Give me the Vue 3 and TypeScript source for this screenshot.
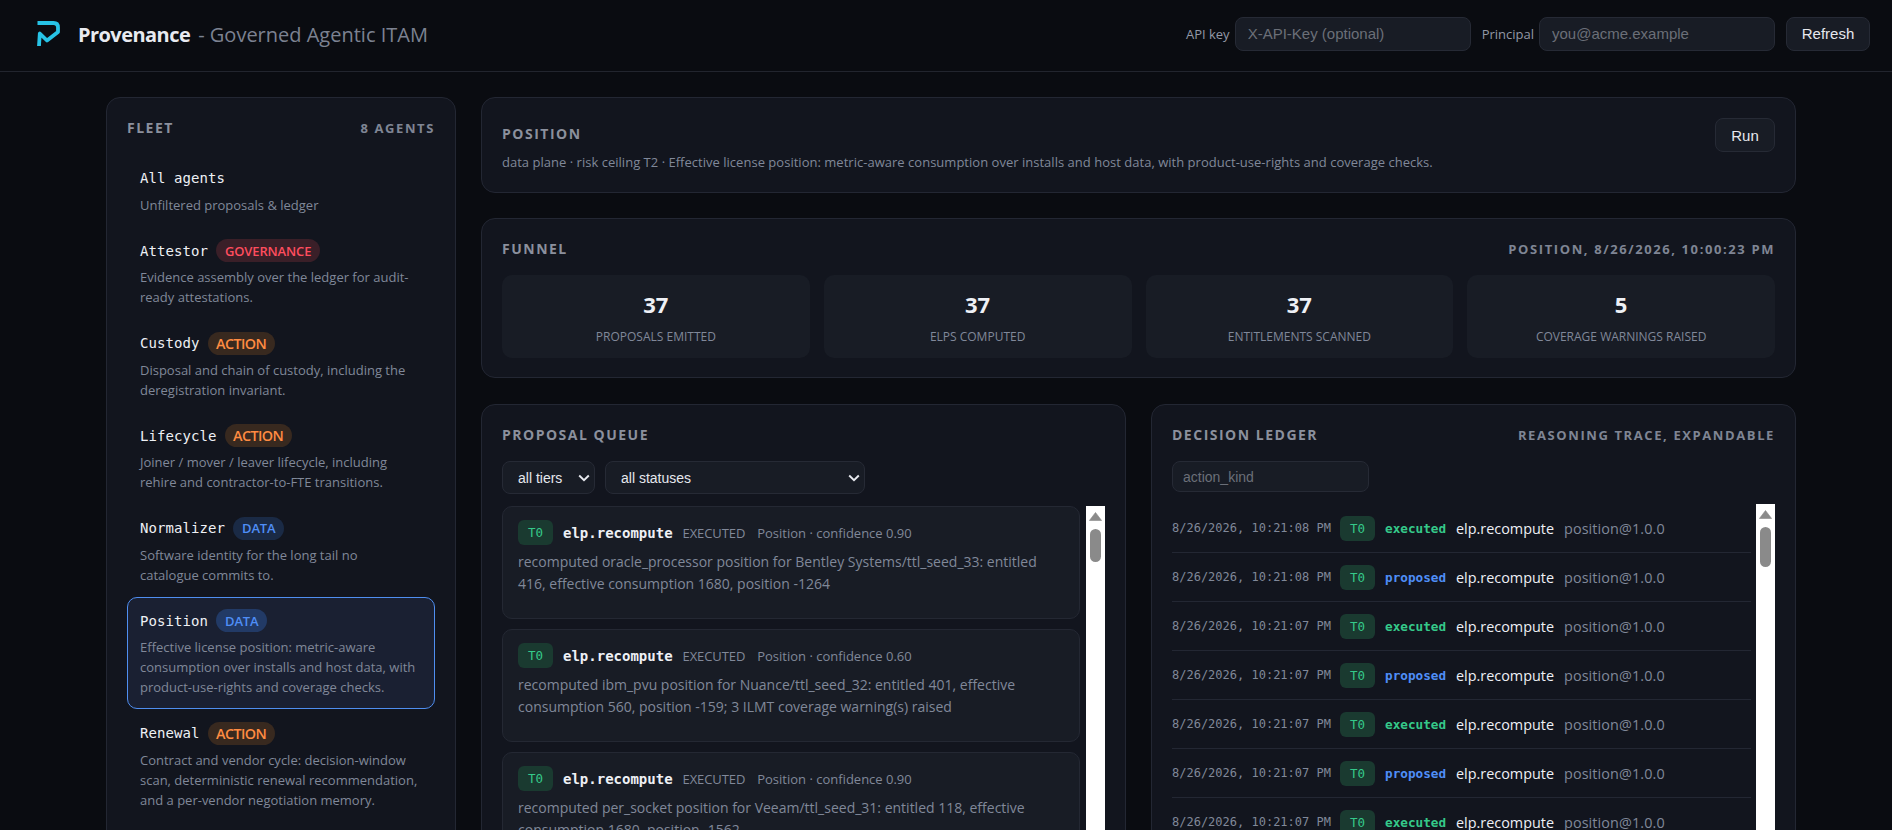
<script setup lang="ts">
interface Agent { name: string; kind?: string; desc: string; active?: boolean }
const agents: Agent[] = [
  { name: 'All agents', desc: 'Unfiltered proposals & ledger' },
  { name: 'Attestor', kind: 'governance', desc: 'Evidence assembly over the ledger for audit-ready attestations.' },
  { name: 'Custody', kind: 'action', desc: 'Disposal and chain of custody, including the deregistration invariant.' },
  { name: 'Lifecycle', kind: 'action', desc: 'Joiner / mover / leaver lifecycle, including rehire and contractor-to-FTE transitions.' },
  { name: 'Normalizer', kind: 'data', desc: 'Software identity for the long tail no\ncatalogue commits to.' },
  { name: 'Position', kind: 'data', active: true, desc: 'Effective license position: metric-aware consumption over installs and host data, with product-use-rights and coverage checks.' },
  { name: 'Renewal', kind: 'action', desc: 'Contract and vendor cycle: decision-window scan, deterministic renewal recommendation, and a per-vendor negotiation memory.' },
]
const metrics = [
  { value: 37, label: 'Proposals emitted' },
  { value: 37, label: 'ELPs computed' },
  { value: 37, label: 'Entitlements scanned' },
  { value: 5, label: 'Coverage warnings raised' },
]
const proposals = [
  { conf: '0.90', text: 'recomputed oracle_processor position for Bentley Systems/ttl_seed_33: entitled 416, effective consumption 1680, position -1264' },
  { conf: '0.60', text: 'recomputed ibm_pvu position for Nuance/ttl_seed_32: entitled 401, effective consumption 560, position -159; 3 ILMT coverage warning(s) raised' },
  { conf: '0.90', text: 'recomputed per_socket position for Veeam/ttl_seed_31: entitled 118, effective consumption 1680, position -1562' },
]
const ledger = [
  { ts: '8/26/2026, 10:21:08 PM', status: 'executed' },
  { ts: '8/26/2026, 10:21:08 PM', status: 'proposed' },
  { ts: '8/26/2026, 10:21:07 PM', status: 'executed' },
  { ts: '8/26/2026, 10:21:07 PM', status: 'proposed' },
  { ts: '8/26/2026, 10:21:07 PM', status: 'executed' },
  { ts: '8/26/2026, 10:21:07 PM', status: 'proposed' },
  { ts: '8/26/2026, 10:21:07 PM', status: 'executed' },
]
</script>

<template>
  <div class="app">
    <header class="topbar">
      <div class="brand">
        <svg class="logo" width="26" height="28" viewBox="0 0 26 28" fill="none">
          <path d="M1.5 3H17.5Q22 3 22 7.5V12L11 20.5L3.8 13.5L3 26" stroke="#27c3e6" stroke-width="3.8" stroke-linejoin="round" />
        </svg>
        <strong class="brand-name">Provenance</strong>
        <span class="brand-sub">- Governed Agentic ITAM</span>
      </div>
      <div class="auth">
        <label class="auth-label">API key</label>
        <input class="field auth-input" placeholder="X-API-Key (optional)" />
        <label class="auth-label principal">Principal</label>
        <input class="field auth-input" placeholder="you@acme.example" />
        <button class="btn refresh">Refresh</button>
      </div>
    </header>

    <main class="layout">
      <aside class="panel fleet">
        <div class="panel-head fleet-head">
          <h2 class="title">Fleet</h2>
          <span class="aside-note">8 agents</span>
        </div>
        <div class="agents">
          <div v-for="a in agents" :key="a.name" class="agent" :class="{ active: a.active }">
            <div class="agent-head">
              <span class="agent-name">{{ a.name }}</span>
              <span v-if="a.kind" class="pill" :class="a.kind">{{ a.kind }}</span>
            </div>
            <p class="agent-desc">{{ a.desc }}</p>
          </div>
        </div>
      </aside>

      <div class="content">
        <section class="panel intro">
          <div>
            <h2 class="title">Position</h2>
            <p class="intro-desc">data plane · risk ceiling T2 · Effective license position: metric-aware consumption over installs and host data, with product-use-rights and coverage checks.</p>
          </div>
          <button class="btn run">Run</button>
        </section>

        <section class="panel funnel">
          <div class="panel-head">
            <h2 class="title">Funnel</h2>
            <span class="aside-note">Position, 8/26/2026, 10:00:23 PM</span>
          </div>
          <div class="metrics">
            <div v-for="m in metrics" :key="m.label" class="metric">
              <div class="metric-value">{{ m.value }}</div>
              <div class="metric-label">{{ m.label }}</div>
            </div>
          </div>
        </section>

        <div class="columns">
          <section class="panel column">
            <div class="panel-head">
              <h2 class="title">Proposal queue</h2>
            </div>
            <div class="filters">
              <div class="select-wrap tiers">
                <select class="select"><option>all tiers</option></select>
                <svg class="chevron" width="12" height="8" viewBox="0 0 12 8" fill="none"><path d="M1.2 1.5L6 6.2L10.8 1.5" stroke="#e6e8ee" stroke-width="1.9" /></svg>
              </div>
              <div class="select-wrap statuses">
                <select class="select"><option>all statuses</option></select>
                <svg class="chevron" width="12" height="8" viewBox="0 0 12 8" fill="none"><path d="M1.2 1.5L6 6.2L10.8 1.5" stroke="#e6e8ee" stroke-width="1.9" /></svg>
              </div>
            </div>
            <div class="scroll queue">
              <article v-for="(p, i) in proposals" :key="i" class="card">
                <div class="card-head">
                  <span class="tier">T0</span>
                  <span class="kind">elp.recompute</span>
                  <span class="state">EXECUTED</span>
                  <span class="meta">Position · confidence {{ p.conf }}</span>
                </div>
                <p class="card-text">{{ p.text }}</p>
              </article>
              <div class="scrollbar" aria-hidden="true">
                <svg class="arrow" width="13" height="9" viewBox="0 0 13 9"><path d="M6.5 0.5L12.6 8.5H0.4Z" fill="#8a8a8a" stroke="#8a8a8a" stroke-width="0.6" stroke-linejoin="round" /></svg>
                <span class="thumb queue-thumb"></span>
              </div>
            </div>
          </section>

          <section class="panel column">
            <div class="panel-head">
              <h2 class="title">Decision ledger</h2>
              <span class="aside-note">Reasoning trace, expandable</span>
            </div>
            <input class="field action-input" placeholder="action_kind" />
            <div class="scroll ledger">
              <div v-for="(r, i) in ledger" :key="i" class="row">
                <span class="ts">{{ r.ts }}</span>
                <span class="tier">T0</span>
                <span class="status" :class="r.status">{{ r.status }}</span>
                <span class="action">elp.recompute</span>
                <span class="version">position@1.0.0</span>
              </div>
              <div class="scrollbar" aria-hidden="true">
                <svg class="arrow" width="13" height="9" viewBox="0 0 13 9"><path d="M6.5 0.5L12.6 8.5H0.4Z" fill="#8a8a8a" stroke="#8a8a8a" stroke-width="0.6" stroke-linejoin="round" /></svg>
                <span class="thumb ledger-thumb"></span>
              </div>
            </div>
          </section>
        </div>
      </div>
    </main>
  </div>
</template>

<style>
html, body { margin: 0; height: 830px; overflow: hidden; background: #0a0c11; }
</style>

<style scoped>
* { box-sizing: border-box; }
.app {
  height: 830px;
  overflow: hidden;
  color: #e6e8ee;
  font-family: "Open Sans", "Noto Sans", sans-serif;
  background: #0a0c11;
}
.topbar {
  height: 72px;
  display: flex;
  align-items: center;
  justify-content: space-between;
  padding: 0 22px 0 36px;
  border-bottom: 1px solid #22252e;
}
.brand { display: flex; align-items: center; margin-bottom: 2px; }
.logo { margin-right: 16px; margin-bottom: 1px; }
.brand-name { font-size: 20px; font-weight: 700; letter-spacing: -0.55px; color: #e8eaf0; }
.brand-sub { margin-left: 8px; font-size: 20px; color: #7c8291; }
.auth { display: flex; align-items: center; margin-bottom: 3.5px; }
.auth-label { font-size: 13px; color: #9298a6; margin-right: 5px; }
.principal { margin-left: 11px; }
.field {
  height: 34px;
  padding: 0 12px;
  border: 1px solid #262a35;
  border-radius: 8px;
  background: #181c25;
  color: #e6e8ee;
  font: 15px "Liberation Sans", Arial, sans-serif;
  outline: none;
}
.field::placeholder { color: #6b6f78; opacity: 1; }
.auth-input { width: 236px; }
.btn {
  height: 34px;
  border: 1px solid #262a35;
  border-radius: 8px;
  background: #181c25;
  color: #e6e8ee;
  font: 15px "Liberation Sans", Arial, sans-serif;
  padding: 0;
}
.refresh { width: 84px; margin-left: 11px; }
.run { width: 60px; flex: none; }

.layout {
  display: grid;
  grid-template-columns: 350px 1fr;
  gap: 25px;
  padding: 25px 96px 0 106px;
}
.panel {
  background: #12151e;
  border: 1px solid #232733;
  border-radius: 14px;
  padding: 20px;
}
.panel-head { display: flex; justify-content: space-between; align-items: center; height: 20px; }
.title {
  margin: 0;
  font-size: 14px;
  font-weight: 700;
  line-height: 20px;
  letter-spacing: 1.5px;
  text-transform: uppercase;
  color: #8b909d;
}
.aside-note {
  font-size: 13px;
  font-weight: 700;
  letter-spacing: 1.6px;
  text-transform: uppercase;
  color: #7f8594;
}
.fleet { height: 1000px; }
.fleet-head { margin-bottom: 16.5px; }
.agents { display: flex; flex-direction: column; gap: 0.5px; }
.agent {
  padding: 11px 12px;
  border: 1px solid transparent;
  border-radius: 10px;
}
.agent.active { background: #1a2032; border-color: #4f8ef0; }
.agent-head { display: flex; align-items: center; gap: 8px; min-height: 23px; }
.agent-name { font: 500 14px "DejaVu Sans Mono", monospace; letter-spacing: 0.07px; color: #eef0f5; }
.pill {
  height: 23px;
  display: flex;
  align-items: center;
  padding: 0 9px;
  border-radius: 12px;
  font-size: 13px;
  font-weight: 600;
  letter-spacing: -0.15px;
  text-transform: uppercase;
}
.pill.governance { background: #3a1f28; color: #ff4d5e; }
.pill.action { padding: 0 8.5px; letter-spacing: -0.6px; background: #38291f; color: #ff8c42; }
.pill.data { background: #1a2a45; color: #4f8ef7; }
.agent.active .pill.data { background: #223a66; }
.agent-desc {
  margin: 5px 0 0;
  font-size: 13px;
  line-height: 20px;
  white-space: pre-line;
  color: #808899;
}

.content { display: flex; flex-direction: column; gap: 25px; min-width: 0; }
.intro { display: flex; justify-content: space-between; align-items: flex-start; height: 96px; }
.intro .title { margin-top: 6px; }
.intro-desc { margin: 9px 0 0; font-size: 13px; line-height: 18px; letter-spacing: 0.02px; color: #808899; }
.funnel { height: 160px; }
.metrics { display: grid; grid-template-columns: repeat(4, 1fr); gap: 14px; margin-top: 16px; }
.metric {
  height: 83px;
  border-radius: 10px;
  background: #181c25;
  text-align: center;
  padding-top: 14px;
}
.metric-value { font-size: 22px; line-height: 30px; font-weight: 700; color: #eef0f5; }
.metric-label { margin-top: 9px; font-size: 12px; line-height: 18px; text-transform: uppercase; color: #808899; }

.columns { display: grid; grid-template-columns: 1fr 1fr; gap: 25px; margin-top: 1px; }
.column { height: 700px; }
.filters { display: flex; gap: 10px; margin-top: 16px; }
.select-wrap { position: relative; height: 33px; }
.tiers { width: 93px; }
.statuses { width: 260px; }
.select {
  appearance: none;
  width: 100%;
  height: 100%;
  padding: 0 15px;
  border: 1px solid #262a35;
  border-radius: 8px;
  background: #181c25;
  color: #e6e8ee;
  font: 14px "Liberation Sans", Arial, sans-serif;
  outline: none;
}
.chevron { position: absolute; right: 5px; top: 13px; }
.scroll { position: relative; overflow: hidden; height: 600px; margin-top: 12px; }
.scrollbar {
  position: absolute;
  top: 0;
  right: 0;
  bottom: 0;
  width: 19px;
  display: flex;
  flex-direction: column;
  align-items: center;
  padding-top: 6px;
  background: #fff;
}
.arrow { flex: none; }
.thumb { flex: none; width: 11.5px; margin-top: 8px; border-radius: 6px; background: #8a8a8a; }
.queue-thumb { height: 33px; }
.ledger-thumb { height: 40px; }
.queue { display: flex; flex-direction: column; gap: 10px; padding-right: 25px; }
.card {
  flex: none;
  height: 113px;
  padding: 13px 22px 13px 15px;
  border: 1px solid #242833;
  border-radius: 10px;
  background: #181c25;
}
.card-head { display: flex; align-items: center; height: 25px; }
.tier {
  flex: none;
  width: 35px;
  height: 25px;
  display: flex;
  align-items: center;
  justify-content: center;
  border-radius: 6px;
  background: #1a3a30;
  color: #35c98a;
  font: 500 12.5px "DejaVu Sans Mono", monospace;
}
.kind { margin-left: 10px; font: 700 14px "DejaVu Sans Mono", monospace; color: #eef0f5; }
.state { margin-left: 10px; font-size: 13px; letter-spacing: -0.1px; color: #808899; }
.meta { margin-left: 12px; font-size: 13px; color: #808899; }
.card-text { margin: 6px 0 0; font-size: 14px; line-height: 22px; color: #808899; }
.action-input { display: block; width: 197px; height: 31px; margin-top: 16px; font-size: 14px; padding: 0 10px; }
.ledger { padding-right: 24px; }
.row {
  display: flex;
  align-items: center;
  gap: 10px;
  height: 49px;
  border-bottom: 1px solid #232733;
}
.ts { flex: none; width: 158px; white-space: nowrap; font: 12px "DejaVu Sans Mono", monospace; color: #808899; }
.status { width: 61px; font: 600 12.7px "DejaVu Sans Mono", monospace; }
.status.executed { color: #35c98a; }
.status.proposed { color: #4f8ef7; }
.action { font-size: 14.4px; color: #eef0f5; }
.version { font-size: 14.4px; letter-spacing: 0.1px; color: #808899; }
</style>
